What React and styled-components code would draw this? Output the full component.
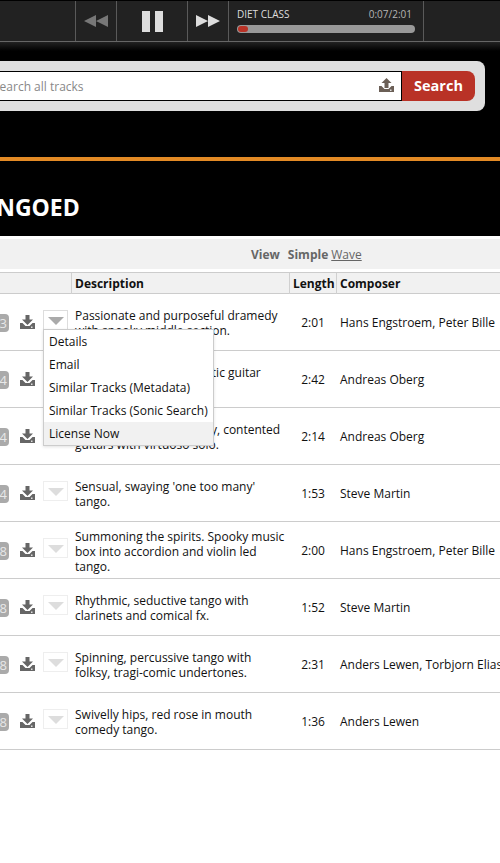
import React from 'react';
import styled, { createGlobalStyle } from 'styled-components';

const Global = createGlobalStyle`
  html, body { margin: 0; padding: 0; background: #fff; }
  body { font-family: "Open Sans", "Liberation Sans", sans-serif; color: #111; }
`;
const Page = styled.div`width: 500px; height: 863px; overflow: hidden; background: #fff;`;
const Dark = styled.header`background: #000; height: 236px; padding-top: 1px; box-sizing: border-box;`;
const Player = styled.div`
  height: 41px; box-sizing: border-box; background: #222; border-bottom: 1px solid #666;
  display: grid; grid-template-columns: 75px 41px 71px 41px 195px 1fr;
`;
const PlayerCell = styled.div`
  border-left: ${p => (p.$first ? 'none' : '1px solid #5a5a5a')};
  display: flex; align-items: center; justify-content: center;
`;
const TrackInfo = styled.div`
  border-left: 1px solid #5a5a5a; padding: 7px 8px 0 8px; box-sizing: border-box;
`;
const TrackText = styled.div`display: flex; justify-content: space-between; padding-right: 3px; font-size: 10px; line-height: 12px; color: #ddd;`;
const Time = styled.span`color: #b5b5b5;`;
const Bar = styled.div`margin-top: 5px; height: 8px; width: 178px; border-radius: 4px; background: #999; overflow: hidden;`;
const Progress = styled.div`height: 6px; margin: 1px; border-radius: 3px; background: #b93226;`;
const Fade = styled.div`height: 9px; background: linear-gradient(#222, #000);`;
const SearchPanel = styled.form`
  margin: 10px 15px 0 -30px; height: 50px; box-sizing: border-box; padding: 10px;
  background: #dfdfdf; border-radius: 8px; display: flex;
`;
const InputWrap = styled.div`
  flex: 1; height: 30px; box-sizing: border-box; background: #fff; border: 1px solid #000;
  display: flex; align-items: center; justify-content: space-between; padding: 0 7px 0 12px;
`;
const Placeholder = styled.span`font-size: 12px; color: #888;`;
const UploadSlot = styled.span`display: flex; margin-bottom: 3px;`;
const SearchButton = styled.button`
  width: 73px; height: 30px; border: 0; padding: 0 0 2px; background: #b93226; color: #fff;
  font: 700 14.5px "Open Sans", sans-serif; border-radius: 0 8px 8px 0;
`;
const Orange = styled.div`height: 4px; margin-top: 46px; background: #e38a25;`;
const Title = styled.h1`margin: 30px 0 0 -33px; font-size: 23px; line-height: 32px; font-weight: 700; color: #fff; white-space: nowrap;`;
const ViewBar = styled.div`
  margin-top: 3px; height: 30px; background: #f1f1f1; display: flex; align-items: center;
  padding-left: 251px; font-size: 12px; color: #666; font-weight: 700;
`;
const Simple = styled.span`margin-left: 8px;`;
const WaveLink = styled.a`margin-left: 3px; font-weight: 400; text-decoration: underline; color: #666;`;
const Grid = styled.div`display: grid; grid-template-columns: 71px 218px 47px 1fr;`;
const Head = styled(Grid)`
  margin-top: 3px; height: 22px; box-sizing: border-box; background: #f1f1f1;
  border-top: 1px solid #ccc; border-bottom: 1px solid #ccc; font-size: 12px; font-weight: 700; color: #111;
`;
const HeadCell = styled.div`
  border-left: ${p => (p.$plain ? 'none' : '1px solid #d0d0d0')};
  padding-left: 3px; line-height: 21px; white-space: nowrap;
`;
const Body = styled.div`position: relative;`;
const Row = styled(Grid)`
  height: 57px; box-sizing: border-box; border-bottom: 1px solid #ccc; font-size: 12px; line-height: 15px; color: #111;
  align-items: center;
`;
const Actions = styled.div`display: flex; align-items: flex-start; height: 100%; margin-left: -12px;`;
const Badge = styled.span`
  width: 21px; height: 18px; margin-top: 20px; border-radius: 4px; background: #aaa; color: #e8e8e8; font-size: 13px; line-height: 18px;
  text-align: right; padding-right: 2px; box-sizing: border-box; flex: none;
`;
const Dl = styled.span`margin: 21px 0 0 11px; display: flex; flex: none;`;
const Drop = styled.span`
  margin: 16px 0 0 8px; width: 25px; height: 20px; box-sizing: border-box; flex: none;
  border: 1px solid ${p => (p.$open ? '#ddd' : '#eee')}; border-bottom-color: ${p => (p.$open ? 'transparent' : '#eee')};
  display: flex; justify-content: center; padding-top: 6px;
`;
const Tri = styled.i`
  width: 0; height: 0; border-left: 8px solid transparent; border-right: 8px solid transparent;
  border-top: 8px solid ${p => (p.$open ? '#aaa' : '#ddd')};
`;
const Desc = styled.div`padding-left: 4px; margin-top: 2px;`;
const Len = styled.div`text-align: center; padding-left: 1px; margin-top: 1px;`;
const Composer = styled.div`padding-left: 4px; white-space: nowrap; margin-top: 1px;`;
const Menu = styled.ul`
  position: absolute; left: 43px; top: 35px; width: 171px; height: 117px; box-sizing: border-box; margin: 0; padding: 0;
  list-style: none; background: #fff; border: 1px solid #ccc; box-shadow: 0 1px 3px rgba(0,0,0,.12);
  font-size: 12px; color: #111;
`;
const MenuItem = styled.li`
  height: 23px; line-height: 23px; padding-left: 5px; white-space: nowrap;
  background: ${p => (p.$hover ? '#f1f1f1' : 'transparent')};
`;

const Rewind = ({ flip, color }) => (
  <svg width="24" height="12" viewBox="0 0 24 12" style={{ transform: flip ? 'scaleX(-1)' : 'none' }}>
    <path d="M0 6 12 0v12zM12 6 24 0v12z" fill={color} />
  </svg>
);
const Pause = () => (
  <svg width="21" height="21" viewBox="0 0 21 21"><path d="M0 0h8v21H0zM13 0h8v21h-8z" fill="#ddd" /></svg>
);
const Tray = ({ up }) => (
  <svg width="15" height="14" viewBox="0 0 15 14" fill={up ? '#6b5f56' : '#666'}>
    {up ? <path d="M7.5 0l5 5h-3v5h-4V5h-3z" /> : <path d="M5.5 0h4v4.5H13L7.5 10 2 4.5h3.5z" />}
    <path d="M0 8h2.5l3 3h4l3-3H15v6H0z" />
    <path d="M11 11.5h1.5V13H11z" fill="#ddd" />
  </svg>
);

const tracks = [
  ['3', 'Passionate and purposeful dramedy with spooky middle section.', '2:01', 'Hans Engstroem, Peter Bille'],
  ['4', 'Wistfully romantic acoustic guitar tango.', '2:42', 'Andreas Oberg'],
  ['4', 'Playfully swinging, breezy, contented guitars with virtuoso solo.', '2:14', 'Andreas Oberg'],
  ['4', "Sensual, swaying 'one too many' tango.", '1:53', 'Steve Martin'],
  ['8', 'Summoning the spirits. Spooky music box into accordion and violin led tango.', '2:00', 'Hans Engstroem, Peter Bille'],
  ['8', 'Rhythmic, seductive tango with clarinets and comical fx.', '1:52', 'Steve Martin'],
  ['8', 'Spinning, percussive tango with folksy, tragi-comic undertones.', '2:31', 'Anders Lewen, Torbjorn Elias'],
  ['8', 'Swivelly hips, red rose in mouth comedy tango.', '1:36', 'Anders Lewen'],
];
const menu = ['Details', 'Email', 'Similar Tracks (Metadata)', 'Similar Tracks (Sonic Search)', 'License Now'];

export default function App() {
  return (
    <Page>
      <Global />
      <Dark>
        <Player>
          <PlayerCell $first />
          <PlayerCell><Rewind color="#777" /></PlayerCell>
          <PlayerCell><Pause /></PlayerCell>
          <PlayerCell><Rewind flip color="#ddd" /></PlayerCell>
          <TrackInfo>
            <TrackText><span>DIET CLASS</span><Time>0:07/2:01</Time></TrackText>
            <Bar><Progress style={{ width: `${(7 / 121) * 178}px` }} /></Bar>
          </TrackInfo>
          <PlayerCell />
        </Player>
        <Fade />
        <SearchPanel>
          <InputWrap>
            <Placeholder>Search all tracks</Placeholder>
            <UploadSlot><Tray up /></UploadSlot>
          </InputWrap>
          <SearchButton type="button">Search</SearchButton>
        </SearchPanel>
        <Orange />
        <Title>TANGOED</Title>
      </Dark>
      <ViewBar>View<Simple>Simple</Simple><WaveLink>Wave</WaveLink></ViewBar>
      <Head>
        <HeadCell $plain />
        <HeadCell>Description</HeadCell>
        <HeadCell>Length</HeadCell>
        <HeadCell>Composer</HeadCell>
      </Head>
      <Body>
        {tracks.map((t, i) => (
          <Row key={i}>
            <Actions>
              <Badge>{t[0]}</Badge>
              <Dl><Tray /></Dl>
              <Drop $open={i === 0}><Tri $open={i === 0} /></Drop>
            </Actions>
            <Desc>{t[1]}</Desc>
            <Len>{t[2]}</Len>
            <Composer>{t[3]}</Composer>
          </Row>
        ))}
        <Menu>
          {menu.map((m, i) => <MenuItem key={m} $hover={i === 4}>{m}</MenuItem>)}
        </Menu>
      </Body>
    </Page>
  );
}
